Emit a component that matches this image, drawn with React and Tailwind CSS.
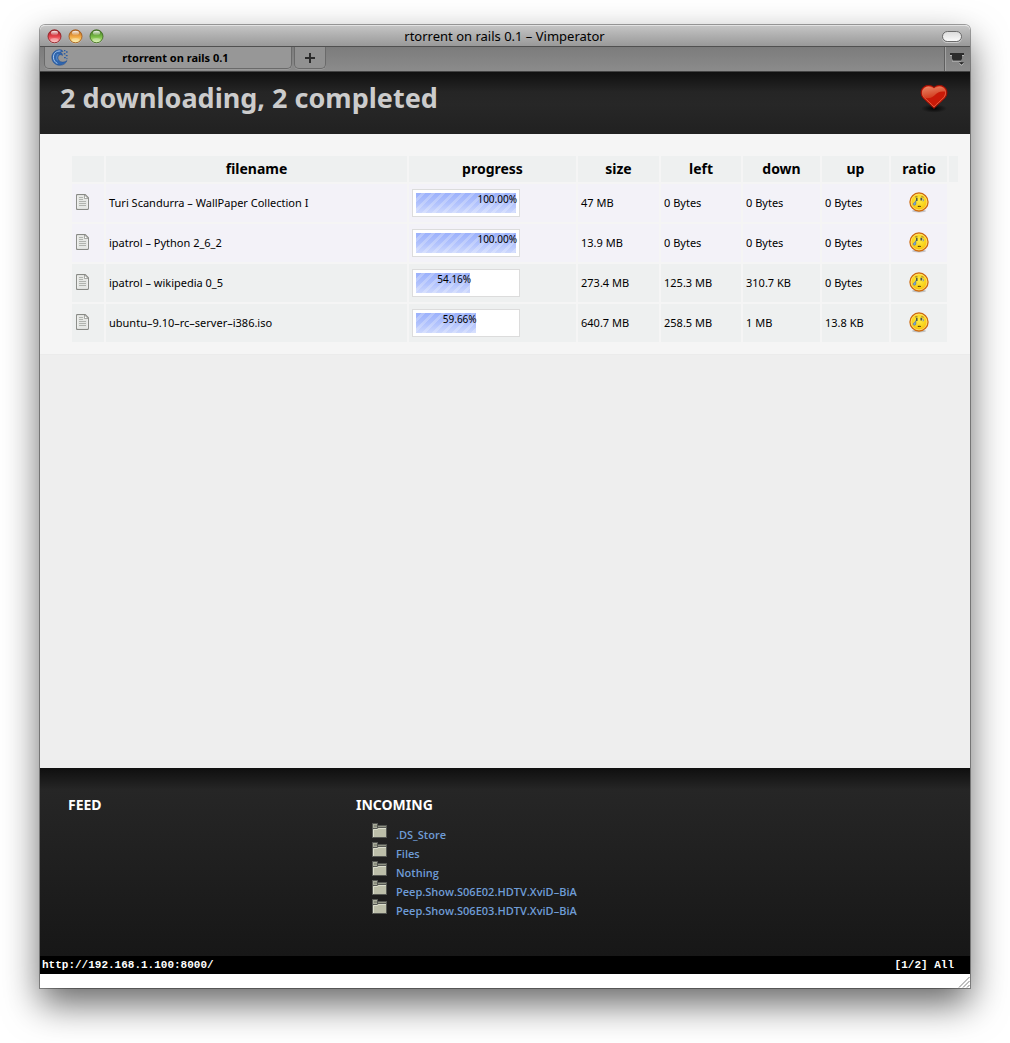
import React from "react";

const torrents = [
  { name: "Turi Scandurra – WallPaper Collection I", progress: 100, size: "47 MB", left: "0 Bytes", down: "0 Bytes", up: "0 Bytes", done: true },
  { name: "ipatrol – Python 2_6_2", progress: 100, size: "13.9 MB", left: "0 Bytes", down: "0 Bytes", up: "0 Bytes", done: true },
  { name: "ipatrol – wikipedia 0_5", progress: 54.16, size: "273.4 MB", left: "125.3 MB", down: "310.7 KB", up: "0 Bytes", done: false },
  { name: "ubuntu–9.10–rc–server–i386.iso", progress: 59.66, size: "640.7 MB", left: "258.5 MB", down: "1 MB", up: "13.8 KB", done: false },
];

const incoming = [
  ".DS_Store",
  "Files",
  "Nothing",
  "Peep.Show.S06E02.HDTV.XviD–BiA",
  "Peep.Show.S06E03.HDTV.XviD–BiA",
];

function TrafficLight({ id, label, rim, dark, light }) {
  return (
    <button type="button" aria-label={label} className="h-[15px] w-[15px]">
      <svg viewBox="0 0 15 15" className="block h-full w-full">
        <defs>
          <linearGradient id={id} x1="0" y1="0" x2="0" y2="1">
            <stop offset="0" stopColor={rim} />
            <stop offset="0.5" stopColor={dark} />
            <stop offset="1" stopColor={light} />
          </linearGradient>
          <linearGradient id={id + "-gloss"} x1="0" y1="0" x2="0" y2="1">
            <stop offset="0" stopColor="#fff" stopOpacity="0.95" />
            <stop offset="1" stopColor="#fff" stopOpacity="0.1" />
          </linearGradient>
        </defs>
        <circle cx="7.5" cy="8.2" r="6.6" fill="#fff" opacity="0.4" />
        <circle cx="7.5" cy="7.3" r="6.5" fill={"url(#" + id + ")"} stroke={rim} strokeWidth="0.9" />
        <ellipse cx="7.5" cy="4" rx="3.6" ry="2.3" fill={"url(#" + id + "-gloss)"} />
        <ellipse cx="7.5" cy="11" rx="4" ry="2" fill="#fff" opacity="0.3" />
      </svg>
    </button>
  );
}

function WaveIcon() {
  return (
    <svg viewBox="0 0 17 17" className="h-[17px] w-[17px]" aria-hidden="true">
      <path
        d="M11 1.2C6 -0.6 0.8 3 0.8 8.2C0.8 13 4.4 16.3 8.8 16.3C12.6 16.3 15 14.3 16 11.6C13.6 13.6 9.8 13.6 8 11.6C6.2 9.6 6.8 6.4 9 5.8C10 5.5 11 5.8 11.4 6.6C11.8 4.8 10.6 3.6 9 3.6C10 2.8 11 2.4 12 2.6Z"
        fill="#2f65ad"
        stroke="#1f4b8c"
        strokeWidth="0.5"
      />
      <path d="M9.5 2C5.5 1.6 2.4 4.4 2.4 8.2C2.4 11 4 13.4 6.4 14.4" fill="none" stroke="#a9c9ee" strokeWidth="1" />
      <path d="M7.2 5C5.6 6.6 5.2 9.4 6.4 11.4" fill="none" stroke="#6f9fd8" strokeWidth="0.8" />
      <path d="M13 1.6H14.4M15 3H16.6M12.8 4.8H14.4M14.8 6.6H16.6M13 8.6H14.8M15.4 9.6H16.4" stroke="#2c5fa5" strokeWidth="1.4" />
    </svg>
  );
}

function ToolIcon() {
  return (
    <svg viewBox="0 0 16 14" className="h-[14px] w-[16px]" aria-hidden="true">
      <path d="M3 9.2H12M1 3.5H3M12 3.5H15" stroke="#b4b4b4" strokeWidth="1" />
      <path d="M1 1H15V3H13V6.8L11.8 8.4H4.2L3 6.8V3H1Z" fill="#2b2b2b" />
      <path d="M10 11.2H15L12.5 13.8Z" fill="#c4c4c4" />
      <path d="M10 10.2H15L12.5 12.8Z" fill="#222" />
    </svg>
  );
}

function HeartIcon() {
  return (
    <svg viewBox="0 0 28 29" className="block h-[29px] w-[28px]" aria-hidden="true">
      <defs>
        <radialGradient id="heart-shade">
          <stop offset="0" stopColor="#000" stopOpacity="0.9" />
          <stop offset="1" stopColor="#000" stopOpacity="0" />
        </radialGradient>
        <linearGradient id="heart-gloss" x1="0" y1="0" x2="0.4" y2="1">
          <stop offset="0" stopColor="#ee9a78" />
          <stop offset="1" stopColor="#d4401f" />
        </linearGradient>
      </defs>
      <ellipse cx="14" cy="24.5" rx="13" ry="4.2" fill="url(#heart-shade)" />
      <path
        d="M14 24.4C11.5 21.4 6.4 17.6 3 13.8C0.2 10.4 0.6 5.6 3.4 3.2C6.6 0.6 11.2 0.9 14 3.4C16.8 0.9 21.4 0.6 24.6 3.2C27.4 5.6 27.8 10.4 25 13.8C21.6 17.6 16.5 21.4 14 24.4Z"
        fill="#c91a08"
        stroke="#a00f04"
        strokeWidth="1"
      />
      <path
        d="M14 22.9C11.5 20 7 16.6 4 13.2C1.8 10.4 2 6.4 4.4 4.2C7 2.2 11.2 2.2 14 4.8C16.8 2.2 21 2.2 23.6 4.2C26 6.4 26.2 10.4 24 13.2C21 16.6 16.5 20 14 22.9Z"
        fill="none"
        stroke="#e8694a"
        strokeWidth="0.9"
      />
      <path
        d="M2.6 11C1.8 8.4 2.4 5.6 4.6 4C7.4 2 11.2 2.6 14 5C16.8 2.6 20.8 2 23.4 4C24.6 5 25.2 6.2 25.3 7.6C20 6.8 17.6 8.4 14.4 11.4C11.4 14.2 7.4 14.6 4.8 13.8Z"
        fill="url(#heart-gloss)"
        opacity="0.85"
      />
    </svg>
  );
}

function DocumentIcon() {
  return (
    <svg viewBox="0 0 14 16" className="block h-[16px] w-[14px]" aria-hidden="true">
      <path d="M1.2 0.6H9.2L12.4 3.8V14.8Q12.4 15.4 11.8 15.4H1.2Q0.6 15.4 0.6 14.8V1.2Q0.6 0.6 1.2 0.6Z" fill="#fff" stroke="#888a85" strokeWidth="1.1" />
      <path d="M2 2H9V5H11V14H2Z" fill="#e6e8e5" />
      <path d="M8.5 1V4.5H12Z" fill="#fff" stroke="#888a85" strokeWidth="0.7" />
      <path d="M3 3.5H7M3 5.5H7M3 7.5H10M3 9.5H10M3 11.5H10" stroke="#b0b3ae" strokeWidth="1" />
    </svg>
  );
}

function CryingFace() {
  return (
    <svg viewBox="0 0 20 21" className="mx-auto block h-[21px] w-[20px]" role="img" aria-label="low ratio">
      <defs>
        <radialGradient id="face-fill" cx="0.5" cy="0.4" r="0.6">
          <stop offset="0" stopColor="#ffee45" />
          <stop offset="0.7" stopColor="#f9cf15" />
          <stop offset="1" stopColor="#f0a80c" />
        </radialGradient>
      </defs>
      <ellipse cx="10" cy="19" rx="7" ry="1.5" fill="#000" opacity="0.2" />
      <circle cx="10" cy="10" r="9" fill="url(#face-fill)" stroke="#cf6b10" strokeWidth="1.4" />
      <circle cx="10" cy="10" r="7.9" fill="none" stroke="#ffe27a" strokeWidth="0.8" />
      <path d="M6 5L8.4 4.6M12.4 4.6L14.6 5.2" stroke="#8a6a20" strokeWidth="0.8" />
      <path d="M7.8 5.8V9M12.2 5.8V8.6" stroke="#3b4650" strokeWidth="1.4" />
      <path d="M6.8 8.6V12C6.8 13.6 4 13.6 4.2 12C4.4 10.8 6 10.4 6.4 9.6Z" fill="#7fa8d8" stroke="#5478a3" strokeWidth="0.7" />
      <path d="M13.6 6.6C14.8 8 14.8 9.2 13.8 9.2" fill="#9dbde2" stroke="#6c8bb0" strokeWidth="0.8" />
      <path d="M8.8 14.6Q10.2 13.8 11.8 14.6" fill="none" stroke="#5a3a06" strokeWidth="1.1" />
    </svg>
  );
}

function FolderIcon() {
  return (
    <svg viewBox="0 0 15 15" className="block h-[15px] w-[15px] shrink-0" aria-hidden="true">
      <path d="M0 0H6V2H15V15H0Z" fill="#555753" />
      <path d="M1 1H5V5H1Z" fill="#a9ac9b" />
      <path d="M2 2H5V4H2Z" fill="#8a8d7e" />
      <path d="M6 3H14V4H6Z" fill="#8f9283" />
      <path d="M1 6H5L6 5H14V14H1Z" fill="#bcbea9" />
      <path d="M1.5 14V6.5H5.5L6.5 5.5H14" fill="none" stroke="#dcdecd" strokeWidth="1" />
    </svg>
  );
}

function ProgressBar({ value }) {
  return (
    <div role="progressbar" aria-valuenow={value} aria-valuemin={0} aria-valuemax={100} className="h-[28px] w-[108px] border border-[#dcdcdc] bg-white p-[3px]">
      <div
        className="flex h-full justify-end bg-[linear-gradient(rgba(255,255,255,0)_0%,rgba(255,255,255,0.2)_50%,rgba(255,255,255,0.5)_100%),repeating-linear-gradient(135deg,#9bb1fc_0px,#9bb1fc_4px,#b2c3fb_4px,#b2c3fb_7px)]"
        style={{ width: value + "%" }}
      >
        <span className="-mr-px text-[10px] leading-3">{value.toFixed(2)}%</span>
      </div>
    </div>
  );
}

const headings = ["", "filename", "progress", "size", "left", "down", "up", "ratio", ""];

export default function App() {
  return (
    <div className="flex min-h-screen flex-col bg-white px-10 pt-[25px] pb-[55px] font-['Noto_Sans','Open_Sans',sans-serif] text-black">
      <div className="flex flex-1 flex-col rounded-t-[5px] bg-white shadow-[0_0_0_1px_rgba(0,0,0,0.35),0_16px_36px_rgba(0,0,0,0.6)]">
        <div className="flex h-[22px] items-center rounded-t-[5px] border-t border-b border-t-[#e2e2e2] border-b-[#505050] bg-linear-to-b from-[#c4c4c4] to-[#999] pr-2 pl-[7px]">
          <div className="flex flex-1 gap-[6px]">
            <TrafficLight id="light-close" label="Close" rim="#8f1d22" dark="#e5424b" light="#ffb4b4" />
            <TrafficLight id="light-min" label="Minimize" rim="#a35a1c" dark="#f0a440" light="#fdf08a" />
            <TrafficLight id="light-zoom" label="Zoom" rim="#3f6b22" dark="#74b843" light="#cff596" />
          </div>
          <h1 className="text-[13px] leading-5">rtorrent on rails 0.1 – Vimperator</h1>
          <div className="flex flex-1 justify-end">
            <button type="button" aria-label="Toggle toolbar" className="h-[11px] w-[20px] rounded-full border border-[#6b6b6b] bg-linear-to-b from-[#dcdcdc] to-[#fafafa] shadow-[0_1px_0_#ccc]" />
          </div>
        </div>

        <div className="flex h-[25px] items-start border-b border-[#444] bg-linear-to-b from-[#7c7c7c] to-[#8b8b8b] pl-1">
          <button type="button" className="flex h-[22px] w-[248px] items-center rounded-b-[5px] border border-t-0 border-[#6a6a6a] bg-[#979797] pl-[6px] shadow-[0_1px_0_#9a9a9a]">
            <WaveIcon />
            <span className="flex-1 pr-2 text-[11px] leading-4 font-bold">rtorrent on rails 0.1</span>
          </button>
          <button type="button" aria-label="New tab" className="ml-[2px] flex h-[22px] w-[32px] items-center justify-center rounded-b-[5px] border border-t-0 border-[#6a6a6a] bg-[#919191] shadow-[0_1px_0_#9a9a9a]">
            <svg viewBox="0 0 10 10" className="h-[10px] w-[10px]" aria-hidden="true">
              <path d="M5 0V10M0 5H10" stroke="#2a2a2a" strokeWidth="2" />
            </svg>
          </button>
          <button type="button" aria-label="Tab list" className="ml-auto flex h-[24px] w-[26px] items-center justify-center border-l border-[#5f5f5f] pr-[2px] shadow-[inset_1px_0_0_#a3a3a3]">
            <ToolIcon />
          </button>
        </div>

        <header className="flex h-[62px] items-start justify-between bg-[linear-gradient(#101010_0px,#252525_20px,#272727_32px,#212121_62px)] pr-[22px] pl-5">
          <h2 className="pt-2 text-[27px] leading-9 font-bold text-[#ccc]">2 downloading, 2 completed</h2>
          <button type="button" aria-label="Donate" className="pt-3">
            <HeartIcon />
          </button>
        </header>

        <main className="flex-1 bg-[#eee]">
          <div className="border-b border-[#ebebeb] bg-[#f5f5f5] pt-5 pr-[10px] pb-[10px] pl-[30px]">
            <table className="w-full table-fixed border-separate border-spacing-[2px]">
              <colgroup>
                <col className="w-[32px]" />
                <col />
                <col className="w-[167px]" />
                <col className="w-[81px]" />
                <col className="w-[80px]" />
                <col className="w-[77px]" />
                <col className="w-[67px]" />
                <col className="w-[56px]" />
                <col className="w-[9px]" />
              </colgroup>
              <thead>
                <tr>
                  {headings.map((h, i) => (
                    <th key={i} className="h-[26px] bg-[#eef0f0] p-0 text-center text-[14px] leading-5 font-bold">
                      {h}
                    </th>
                  ))}
                </tr>
              </thead>
              <tbody className="text-[11px] leading-4">
                {torrents.map((t) => (
                  <tr key={t.name} className={t.done ? "*:bg-[#f3f2f8]" : "*:bg-[#eef0f0]"}>
                    <td className="px-1 pb-[2px]"><DocumentIcon /></td>
                    <td className="truncate px-[3px]">{t.name}</td>
                    <td className="px-[3px] py-[5px]"><ProgressBar value={t.progress} /></td>
                    <td className="px-[3px]">{t.size}</td>
                    <td className="px-[3px]">{t.left}</td>
                    <td className="px-[3px]">{t.down}</td>
                    <td className="px-[3px]">{t.up}</td>
                    <td className="px-[3px] pb-[2px]"><CryingFace /></td>
                  </tr>
                ))}
              </tbody>
            </table>
          </div>
        </main>

        <footer className="flex h-[188px] bg-[linear-gradient(#0f0f0f_0px,#262626_22px,#171717_188px)] pt-[27px] pl-7">
          <section className="w-[32%] min-w-[120px] max-w-[288px] text-white">
            <h3 className="text-[14px] leading-5 font-bold">FEED</h3>
          </section>
          <section className="min-w-0">
            <h3 className="text-[14px] leading-5 font-bold text-white">INCOMING</h3>
            <ul className="pt-2 pl-4">
              {incoming.map((name) => (
                <li key={name} className="flex h-[19px] items-start gap-[9px]">
                  <FolderIcon />
                  <a href="#" className="pt-1 font-['Open_Sans','Noto_Sans',sans-serif] text-[11px] leading-4 font-semibold text-[#6f9cd6]">{name}</a>
                </li>
              ))}
            </ul>
          </section>
        </footer>

        <div className="flex h-[18px] items-center justify-between bg-black pr-4 pl-[2px] font-['Liberation_Mono',monospace] text-[11px] leading-4 font-bold text-white">
          <span>http://192.168.1.100:8000/</span>
          <span>[1/2] All</span>
        </div>
        <div className="flex h-[14px] items-end justify-end bg-white">
          <svg viewBox="0 0 12 12" className="h-[12px] w-[12px]" aria-hidden="true">
            <path d="M1 11.5L11.5 1M5 11.5L11.5 5M9 11.5L11.5 9" stroke="#808080" strokeWidth="1" />
          </svg>
        </div>
      </div>
    </div>
  );
}
